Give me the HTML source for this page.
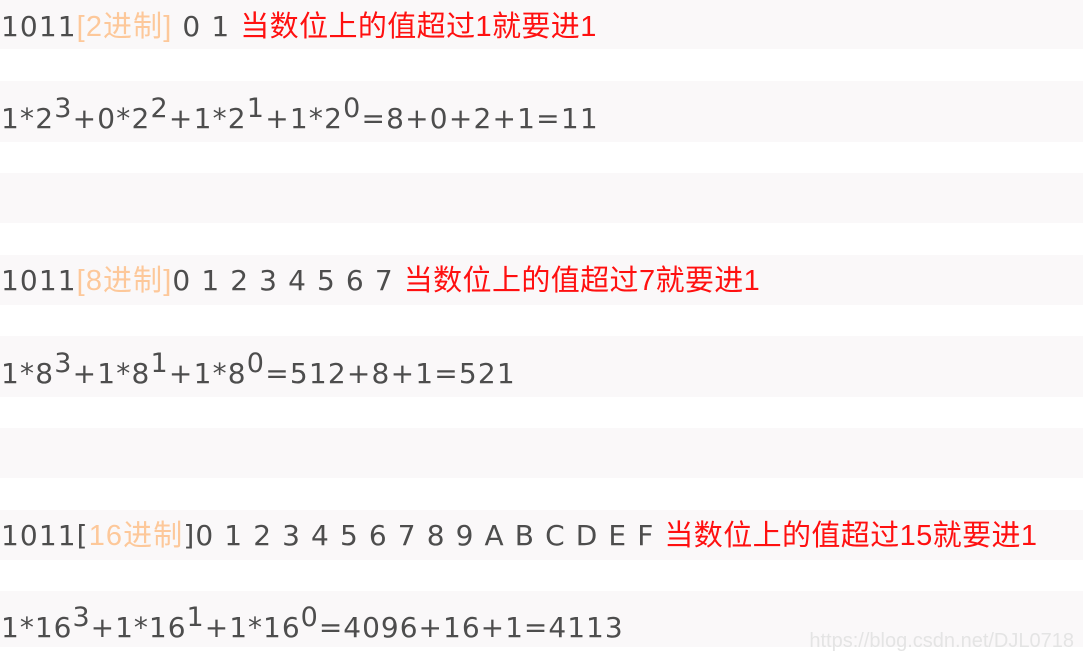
<!DOCTYPE html>
<html><head><meta charset="utf-8"><style>
body{margin:0;width:1088px;height:647px;background:#fff;overflow:hidden;position:relative;font-family:"DejaVu Sans","Noto Sans CJK SC",sans-serif;color:#4d4d4d;font-size:28px}
.b{position:absolute;left:0;width:1083px;background:#faf8f9}
.t{position:absolute;left:1px;white-space:nowrap;line-height:30px;letter-spacing:1.1px}
.t.f{letter-spacing:1.2px}
.o{color:#fdc89a;font-family:"Liberation Sans","Noto Sans CJK SC",sans-serif;font-size:29px}
.r{color:#ff1010;font-family:"Liberation Sans","Noto Sans CJK SC",sans-serif;font-size:29px;letter-spacing:0.4px}
sup{font-size:27px;vertical-align:11px;line-height:0}
.w{position:absolute;right:14px;bottom:-6px;color:#e4e4e4;font-family:"Liberation Sans",sans-serif;font-size:20px}
</style></head><body>
<div class="b" style="top:0;height:49px"></div>
<div class="b" style="top:81px;height:61px"></div>
<div class="b" style="top:173px;height:50px"></div>
<div class="b" style="top:255px;height:50px"></div>
<div class="b" style="top:336px;height:61px"></div>
<div class="b" style="top:428px;height:50px"></div>
<div class="b" style="top:510px;height:50px"></div>
<div class="b" style="top:591px;height:56px"></div>
<div class="t" style="top:12px">1011<span class="o">[2进制]</span> 0 1 <span class="r">当数位上的值超过1就要进1</span></div>
<div class="t f" style="top:104px">1*2<sup>3</sup>+0*2<sup>2</sup>+1*2<sup>1</sup>+1*2<sup>0</sup>=8+0+2+1=11</div>
<div class="t" style="top:266px">1011<span class="o">[8进制]</span>0 1 2 3 4 5 6 7 <span class="r">当数位上的值超过7就要进1</span></div>
<div class="t f" style="top:359px">1*8<sup>3</sup>+1*8<sup>1</sup>+1*8<sup>0</sup>=512+8+1=521</div>
<div class="t" style="top:521px">1011[<span class="o">16进制</span>]0 1 2 3 4 5 6 7 8 9 A B C D E F <span class="r">当数位上的值超过15就要进1</span></div>
<div class="t f" style="top:613px;letter-spacing:1px">1*16<sup>3</sup>+1*16<sup>1</sup>+1*16<sup>0</sup>=4096+16+1=4113</div>
<div class="w">https://blog.csdn.net/DJL0718</div>
</body></html>
